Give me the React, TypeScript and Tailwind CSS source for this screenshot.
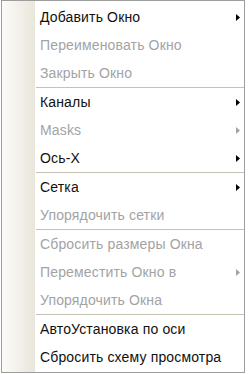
import React from "react";

type Item = { label: string; disabled?: boolean; arrow?: boolean } | "sep";

const items: Item[] = [
  { label: "Добавить Окно", arrow: true },
  { label: "Переименовать Окно", disabled: true },
  { label: "Закрыть Окно", disabled: true },
  "sep",
  { label: "Каналы", arrow: true },
  { label: "Masks", disabled: true, arrow: true },
  { label: "Ось-X", arrow: true },
  "sep",
  { label: "Сетка", arrow: true },
  { label: "Упорядочить сетки", disabled: true },
  "sep",
  { label: "Сбросить размеры Окна", disabled: true },
  { label: "Переместить Окно в", disabled: true, arrow: true },
  { label: "Упорядочить Окна", disabled: true },
  "sep",
  { label: "АвтоУстановка по оси" },
  { label: "Сбросить схему просмотра" },
];

function Arrow({ disabled }: { disabled?: boolean }) {
  return (
    <svg width="4" height="7" viewBox="0 0 4 7" className="shrink-0">
      <path d="M0 0 L4 3.5 L0 7 Z" fill={disabled ? "#a3a3a3" : "#000"} />
    </svg>
  );
}

export default function App() {
  return (
    <div className="w-[248px] h-[374px] bg-white" style={{ fontFamily: '"Liberation Sans", Arial, sans-serif' }}>
      <div className="ml-px w-[244px] border border-[#9d9d9d] bg-white flex">
        <div className="w-[33px] shrink-0 bg-gradient-to-r from-[#fcfbf8] to-[#e9e6db]" />
        <div className="flex-1 flex flex-col pt-[2px] pb-[1px]">
          {items.map((it, i) =>
            it === "sep" ? (
              <div key={i} className="h-px ml-px bg-[#c5c2b2]" />
            ) : (
              <div
                key={i}
                className={`h-[28px] flex items-center justify-between pl-[5px] pr-[4px] text-[14px] tracking-[0.15px] ${
                  it.disabled ? "text-[#a3a3a3]" : "text-[#111]"
                }`}
              >
                <span>{it.label}</span>
                {it.arrow && <Arrow disabled={it.disabled} />}
              </div>
            )
          )}
        </div>
      </div>
    </div>
  );
}
